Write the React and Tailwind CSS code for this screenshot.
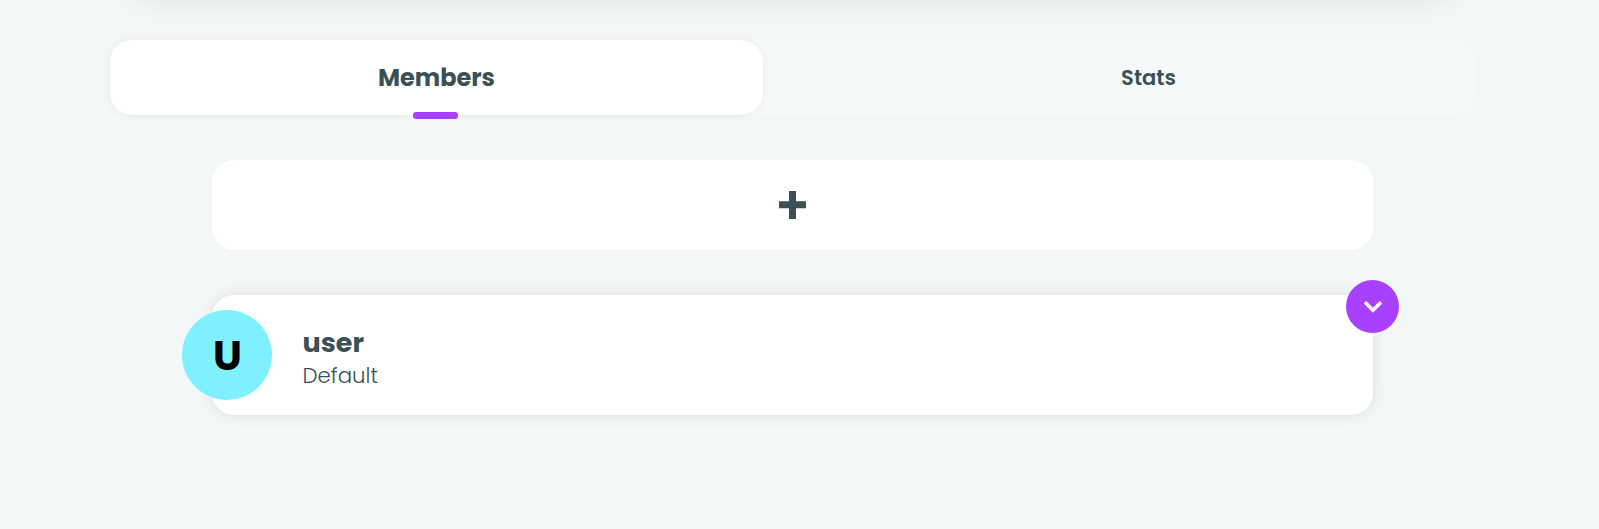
const font = "font-['Poppins','Inter',sans-serif] [font-feature-settings:'cv11'] text-[#3b5054]";

function Tabs() {
  return (
    <nav className="flex h-[75px] w-[1365px] justify-between rounded-[22px] bg-[#f5f9fa]">
      <button className="relative flex w-[653px] items-center justify-center rounded-[22px] bg-white text-[24px] leading-none font-bold shadow-[0_0_8px_rgba(0,0,0,0.06)]">
        <span>Members</span>
        <span className="absolute top-[71.5px] left-[303.4px] h-[7.5px] w-[45px] rounded-[3px] bg-[#aa40ff]" />
      </button>
      <button className="flex w-[653px] items-center justify-center text-[21px] leading-none font-semibold">
        <span>Stats</span>
      </button>
    </nav>
  );
}

function AddMember() {
  return (
    <button aria-label="Add" className="flex h-[90px] w-full items-center justify-center rounded-[22px] bg-white">
      <svg width="27" height="28" viewBox="0 0 27 28" fill="#3b5054">
        <path d="M10 0h7v10.3h10v6.9H17V28h-7V17.2H0v-6.9h10z" />
      </svg>
    </button>
  );
}

function Member() {
  return (
    <article className="relative flex h-[120px] w-full items-center rounded-[22px] bg-white shadow-[0_0_15px_rgba(0,0,0,0.1)]">
      <div className="-ml-[30px] flex size-[90px] items-center justify-center rounded-full bg-[#7ff0ff] pl-px text-[41px] leading-none font-bold text-black">
        U
      </div>
      <div className="ml-[30.5px] flex flex-col pt-1.5">
        <span className="text-[27px] leading-[36px] font-bold">user</span>
        <span className="text-[21.3px] leading-[30px] font-light">Default</span>
      </div>
      <button aria-label="Expand" className="absolute -top-[15px] -right-[26px] flex size-[53px] items-center justify-center rounded-full bg-[#aa40ff]">
        <svg width="20" height="14" viewBox="0 0 20 14" fill="none" stroke="white" strokeWidth="3.6">
          <path d="M2 2.2l8 8 8-8" />
        </svg>
      </button>
    </article>
  );
}

export default function App() {
  return (
    <div className={`h-[529px] overflow-hidden bg-[#f2f8f8] ${font}`}>
      <div className="-mt-10 ml-[130px] h-10 w-[1325px] rounded-[22px] shadow-[0_0_30px_rgba(0,0,0,0.08)]" />
      <main className="ml-[110px] flex w-[1365px] flex-col items-center pt-10">
        <Tabs />
        <section className="mt-[45px] flex w-[1161px] flex-col gap-[45px]">
          <AddMember />
          <Member />
        </section>
      </main>
    </div>
  );
}
